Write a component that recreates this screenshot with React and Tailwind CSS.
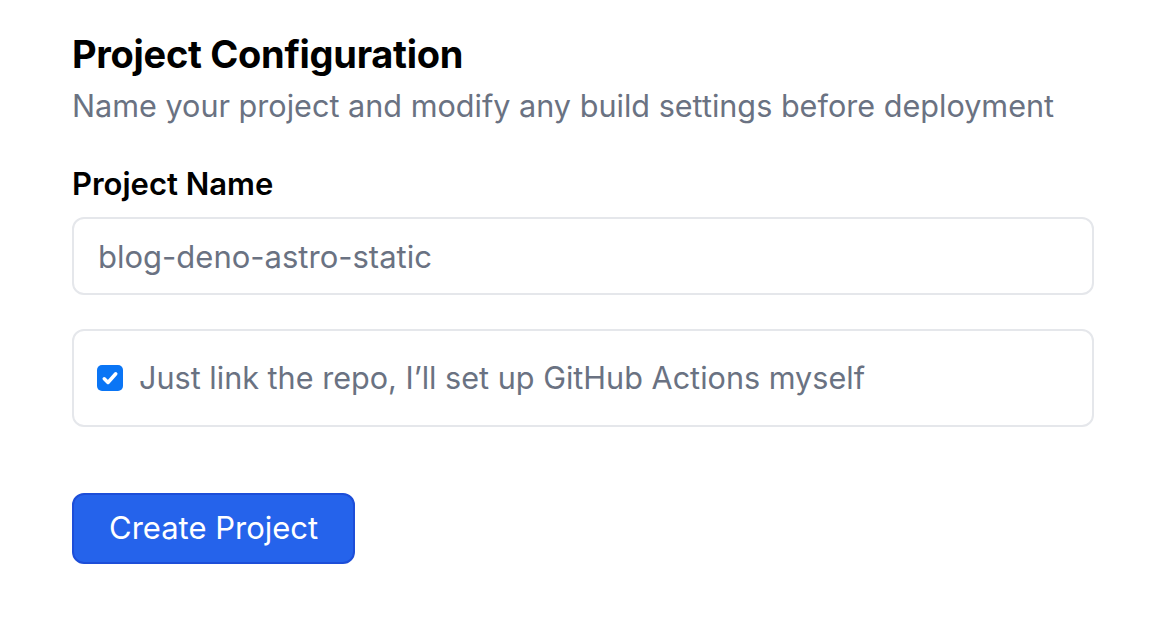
import React, { useState } from "react";

function CheckIcon() {
	return (
		<svg viewBox="0 0 16 16" className="w-[20px] h-[20px]" fill="none">
			<path
				d="M3.4 8.6l3 3 6.2-7"
				stroke="white"
				strokeWidth="2.8"
				strokeLinecap="round"
				strokeLinejoin="round"
			/>
		</svg>
	);
}

export default function App() {
	const [projectName, setProjectName] = useState("blog-deno-astro-static");
	const [linkOnly, setLinkOnly] = useState(true);

	return (
		<div
			className="min-h-[638px] bg-white px-[72px] pt-[26px] text-black"
			style={{ fontFamily: "Inter, 'Noto Sans', sans-serif" }}
		>
			<div className="w-[1022px]">
				<h1 className="text-[38px] leading-[56px] font-bold tracking-[-0.3px]">
					Project Configuration
				</h1>
				<p className="text-[30.6px] leading-[48px] text-gray-500">
					Name your project and modify any build settings before deployment
				</p>

				<label className="mt-[30px] block text-[31px] leading-[48px] font-semibold">
					Project Name
				</label>
				<input
					value={projectName}
					onChange={(e) => setProjectName(e.target.value)}
					className="mt-[9px] block h-[78px] w-full rounded-[12px] border-2 border-gray-200 px-[24px] text-[31px] text-gray-500 outline-none"
				/>

				<div className="mt-[34px] flex h-[98px] items-center rounded-[12px] border-2 border-gray-200 px-[23px]">
					<button
						type="button"
						onClick={() => setLinkOnly(!linkOnly)}
						className={
							linkOnly
								? "flex h-[26px] w-[26px] items-center justify-center rounded-[5px] bg-[#0a75f5]"
								: "flex h-[26px] w-[26px] items-center justify-center rounded-[5px] border-2 border-gray-400 bg-white"
						}
					>
						{linkOnly && <CheckIcon />}
					</button>
					<span className="ml-[16px] text-[30.6px] text-gray-500">
						Just link the repo, I’ll set up GitHub Actions myself
					</span>
				</div>

				<button
					type="button"
					className="mt-[66px] h-[71px] rounded-[12px] border-2 border-[#1d4ed8] bg-[#2563eb] px-[35px] text-[31px] text-white"
				>
					Create Project
				</button>
			</div>
		</div>
	);
}
